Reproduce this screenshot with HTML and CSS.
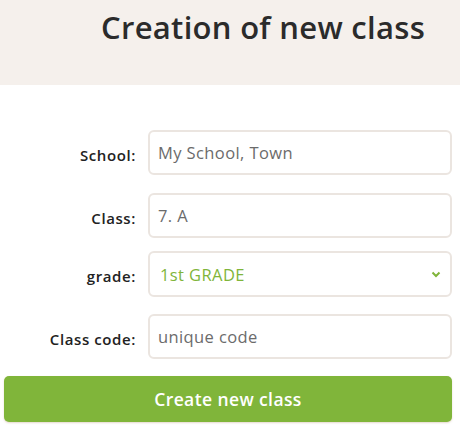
FILE: index.html
```html
<!DOCTYPE html>
<html>
<head>
<meta charset="utf-8">
<link rel="stylesheet" href="styles.css">
</head>
<body>
<header class="top">
  <h1 class="title">Creation of new class</h1>
</header>
<form class="form">
  <div class="row">
    <label class="lbl" for="school">School:</label>
    <input class="field" id="school" type="text" placeholder="My School, Town">
  </div>
  <div class="row row-b">
    <label class="lbl" for="cls">Class:</label>
    <input class="field" id="cls" type="text" placeholder="7. A">
  </div>
  <div class="row row-c">
    <label class="lbl" for="grade">grade:</label>
    <div class="sel">
      <span class="sel-text">1st GRADE</span>
      <svg class="chev" width="10" height="7" viewBox="0 0 10 7"><path d="M1.5 1.5 L5 5 L8.5 1.5" fill="none" stroke="#80b53a" stroke-width="2"/></svg>
    </div>
  </div>
  <div class="row row-d">
    <label class="lbl" for="code">Class code:</label>
    <input class="field" id="code" type="text" placeholder="unique code">
  </div>
  <button class="btn" type="button">Create new class</button>
</form>
</body>
</html>
```
FILE: styles.css
```css
* { box-sizing: border-box; }
body {
  margin: 0;
  width: 460px;
  height: 433px;
  overflow: hidden;
  background: #fff;
  font-family: "Open Sans", "DejaVu Sans", sans-serif;
  color: #2a2a2a;
}
.top {
  background: #f5f0ec;
  height: 85px;
  padding: 7px 0 0 101px;
}
.title {
  margin: 0;
  font-size: 31px;
  font-weight: 600;
  line-height: 40px;
  color: #2b2b2b;
  letter-spacing: 0.3px;
}
.form {
  padding: 45px 8px 0 4px;
}
.row {
  display: flex;
  align-items: center;
  gap: 12px;
  height: 45px;
}
.row-b { margin-top: 18px; }
.row-c { margin-top: 13px; height: 46px; }
.row-d { margin-top: 17px; }
.lbl {
  width: 132px;
  text-align: right;
  font-size: 15px;
  font-weight: 600;
  letter-spacing: 0.6px;
  color: #222;
  padding-top: 4px;
}
.field, .sel {
  width: 304px;
  height: 100%;
  border: 2px solid #ebe5e0;
  border-radius: 6px;
  padding: 0 8px;
  font-family: inherit;
  font-size: 16.5px;
  letter-spacing: 0.4px;
  color: #555;
  background: #fff;
  outline: none;
}
.field::placeholder { color: #6b6b6b; }
.sel {
  display: flex;
  align-items: center;
  justify-content: space-between;
  padding: 0 9px 0 10px;
}
.sel-text { color: #80b53a; }
.chev { display: block; margin-top: 1px; }
.btn {
  display: block;
  margin-top: 17px;
  width: 448px;
  height: 46px;
  border: none;
  border-radius: 5px;
  background: #80b53a;
  color: #fff;
  font-family: inherit;
  font-size: 17.5px;
  font-weight: 600;
  letter-spacing: 0.4px;
  box-shadow: 0 1px 2px rgba(180,140,110,0.35);
}
```
